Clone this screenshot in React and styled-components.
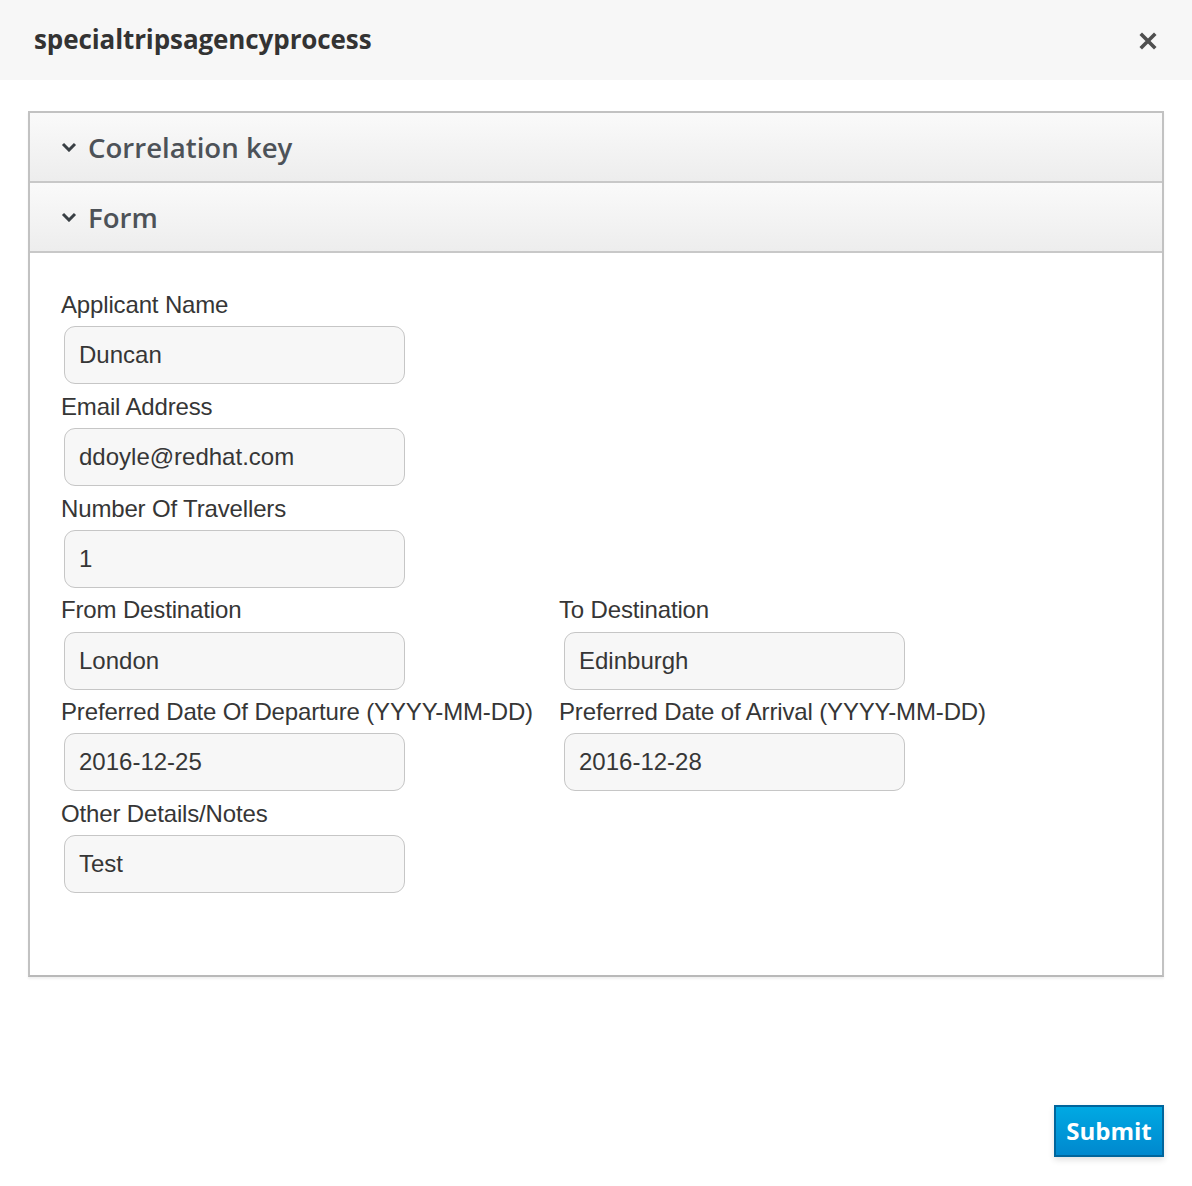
import React from 'react';
import styled, { createGlobalStyle } from 'styled-components';

const GlobalStyle = createGlobalStyle`
  html, body {
    margin: 0;
    padding: 0;
    background: #fff;
  }
  body {
    font-family: "Liberation Sans", Arial, sans-serif;
  }
`;

const fields = [
  [{ label: 'Applicant Name', value: 'Duncan' }],
  [{ label: 'Email Address', value: 'ddoyle@redhat.com' }],
  [{ label: 'Number Of Travellers', value: '1' }],
  [
    { label: 'From Destination', value: 'London' },
    { label: 'To Destination', value: 'Edinburgh' },
  ],
  [
    { label: 'Preferred Date Of Departure (YYYY-MM-DD)', value: '2016-12-25' },
    { label: 'Preferred Date of Arrival (YYYY-MM-DD)', value: '2016-12-28' },
  ],
  [{ label: 'Other Details/Notes', value: 'Test' }],
];

const CloseIcon = () => (
  <svg width="18" height="18" viewBox="0 0 18 18">
    <path d="M3 3 L15 15 M15 3 L3 15" stroke="#4f4f4f" strokeWidth="3.6" strokeLinecap="square" />
  </svg>
);

const Chevron = () => (
  <svg width="16" height="10" viewBox="0 0 16 10">
    <path d="M2 2 L8 8 L14 2" fill="none" stroke="#393f44" strokeWidth="3" />
  </svg>
);

let App = () =>
  <Page>
    <GlobalStyle />
    <Header>
      <Title>specialtripsagencyprocess</Title>
      <CloseButton><CloseIcon /></CloseButton>
    </Header>
    <Body>
      <Panel>
        <PanelHeading>
          <Chevron />
          <HeadingText>Correlation key</HeadingText>
        </PanelHeading>
        <PanelHeading>
          <Chevron />
          <HeadingText>Form</HeadingText>
        </PanelHeading>
        <FormBody>
          {fields.map((row, i) =>
            <Row key={i}>
              {row.map((f, j) =>
                <Field key={f.label}>
                  <Label>{f.label}</Label>
                  <Input defaultValue={f.value} indent={j === 0 ? 3 : 5} />
                </Field>
              )}
            </Row>
          )}
        </FormBody>
      </Panel>
    </Body>
    <Footer>
      <SubmitButton>Submit</SubmitButton>
    </Footer>
  </Page>

export default App;

let Page = styled.div`
  width: 1192px;
  min-height: 1186px;
  display: flex;
  flex-direction: column;
`;

let Header = styled.div`
  height: 80px;
  background: #f7f7f7;
  display: flex;
  align-items: center;
  justify-content: space-between;
  padding: 0 35px 0 34px;
  box-sizing: border-box;
`;

let Title = styled.h4`
  margin: 0;
  font-family: "Open Sans", sans-serif;
  font-weight: 700;
  font-size: 26px;
  letter-spacing: -0.1px;
  color: #333;
  margin-top: -3px;
`;

let CloseButton = styled.span`
  display: flex;
  margin-top: 1px;
`;

let Body = styled.div`
  padding: 31px 28px 0 28px;
`;

let Panel = styled.div`
  border: 2px solid #c2c2c2;
  border-bottom-color: #b9b9b9;
  box-shadow: 0 2px 2px rgba(0, 0, 0, 0.06);
`;

let PanelHeading = styled.div`
  height: 68px;
  display: flex;
  align-items: center;
  padding-left: 31px;
  background: linear-gradient(to bottom, #fafafa, #ededed);
  border-bottom: 2px solid #c8c8c8;
  gap: 11px;
`;

let HeadingText = styled.span`
  font-family: "Open Sans", sans-serif;
  font-weight: 600;
  font-size: 27.6px;
  color: #4d5258;
  margin-top: -1px;
`;

let FormBody = styled.div`
  padding: 29.5px 30px 82px 31px;
  background: #fff;
`;

let Row = styled.div`
  display: grid;
  grid-template-columns: 498px 1fr;
`;

let Field = styled.div`
  display: flex;
  flex-direction: column;
`;

let Label = styled.label`
  display: block;
  font-size: 24px;
  line-height: 27px;
  color: #363636;
  margin: 8.6px 0 8.2px 0;
  white-space: nowrap;
  letter-spacing: -0.15px;
`;

let Input = styled.input`
  width: 341px;
  height: 58px;
  box-sizing: border-box;
  margin-left: ${props => props.indent}px;
  padding: 0 14px;
  border: 1.5px solid #c6c6c6;
  border-radius: 11px;
  background: #f7f7f7;
  font-family: "Liberation Sans", Arial, sans-serif;
  font-size: 24px;
  color: #363636;
  outline: none;
`;

let Footer = styled.div`
  display: flex;
  justify-content: flex-end;
  padding: 128px 28px 31px 0;
`;

let SubmitButton = styled.button`
  width: 110px;
  height: 52px;
  box-sizing: border-box;
  border: 2px solid #00659c;
  background: linear-gradient(to bottom, #00a9e3, #0088ce);
  color: #fff;
  font-family: "Open Sans", sans-serif;
  font-weight: 700;
  font-size: 24px;
  padding: 0 0 2px 0;
  box-shadow: 0 3px 6px rgba(0, 0, 0, 0.12);
  cursor: pointer;
`;
